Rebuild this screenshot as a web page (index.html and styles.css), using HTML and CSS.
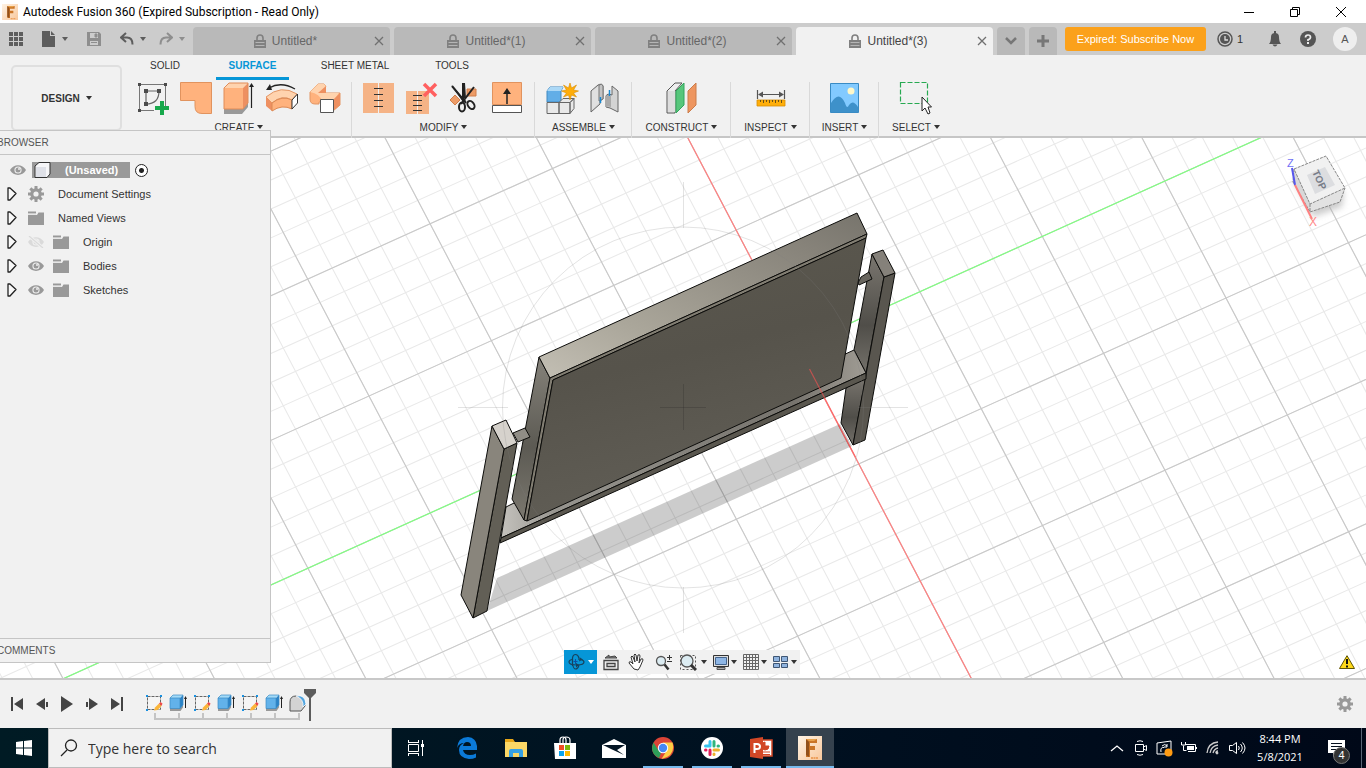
FILE: index.html
```html
<!DOCTYPE html>
<html lang="en">
<head>
<meta charset="utf-8">
<title>Autodesk Fusion 360</title>
<link rel="stylesheet" href="styles.css">
</head>
<body>
<svg class="defs" aria-hidden="true">
  <defs>
    <linearGradient id="g-f" x1="0" y1="0" x2="1" y2="1"><stop offset="0" stop-color="#fff3e4"/><stop offset="1" stop-color="#f8c79c"/></linearGradient>
  </defs>
  <symbol id="i-lock" viewBox="0 0 12 14"><path d="M3 6V4a3 3 0 0 1 6 0v2" fill="none" stroke="#808080" stroke-width="1.6"/><path fill="#808080" d="M0 6h12v8H0z"/><path stroke="#b5b5b5" d="M1.500 8.500h9M1.500 11.500h9"/></symbol>
  <symbol id="i-x" viewBox="0 0 10 10"><path d="M1 1l8 8M9 1L1 9" fill="none" stroke="#707070" stroke-width="1.300"/></symbol>
  <symbol id="i-arrow" viewBox="0 0 10 14"><path d="M1 1v12h2l6-6.500L3 1z" fill="#f8f8f8" stroke="#222" stroke-width="1.300" stroke-linejoin="round"/></symbol>
  <symbol id="i-eye" viewBox="0 0 16 12"><path d="M0 6c3.500-6.500 12.500-6.500 16 0-3.500 6.500-12.500 6.500-16 0z" fill="#999"/><circle cx="8" cy="6" r="3.600" fill="#efefef"/><circle cx="8" cy="6" r="2.500" fill="#999"/><circle cx="9" cy="5" r="1" fill="#eee"/></symbol>
  <symbol id="i-folder" viewBox="0 0 16 14"><path d="M0 4h9l1.500-2.500H16V14H0z" fill="#999"/><path d="M0 .5h8v2H0z" fill="#999"/><path d="M0 3.200h8.500" stroke="#ddd" stroke-width=".8"/></symbol>
  <symbol id="i-gear" viewBox="0 0 16 16"><g fill="#999"><path d="M6.500 0h3v16h-3z"/><path d="M0 6.500h16v3H0z"/><path d="M6.500 0h3v16h-3z" transform="rotate(45 8 8)"/><path d="M6.500 0h3v16h-3z" transform="rotate(-45 8 8)"/><circle cx="8" cy="8" r="5.800"/></g><circle cx="8" cy="8" r="2.600" fill="#f1f1f1"/></symbol>
  <symbol id="i-sketch" viewBox="0 0 18 18"><path d="M2.500 2.500h13v13h-13z" fill="#f5f5f5" stroke="#666" stroke-dasharray="3 1"/><g fill="#1990e0"><path d="M1 1h2v2H1zM15 1h2v2h-2zM1 15h2v2H1z"/></g><path d="M9 16.500l1-3 4-4 2.500 2.500-4 4z" fill="#fbb53a"/><path d="M14 9.500l1.500-1.500 2 1.500-1 2.500z" fill="#f04a4a"/></symbol>
  <symbol id="i-extrude" viewBox="0 0 18 18"><path d="M1 14h10l3-3v2.500L11.500 17H1z" fill="#999"/><path d="M1 4h10v10.500H1z" fill="#62b2ea"/><path d="M1 4l3-3h10l-3 3z" fill="#a4dbf8"/><path d="M11 4l3-3v10l-3 3.500z" fill="#2b83c6"/><path d="M1 4h10v10.500H1zM1 4l3-3h10v10l-3 3.500" fill="none" stroke="#398bc4" stroke-width=".7"/><path d="M16.500 4v10" stroke="#222"/><path d="M15 5l1.500-3L18 5z" fill="#222"/></symbol>
  <symbol id="i-f" viewBox="0 0 24 24"><path d="M0 0h24v24H0z" fill="url(#g-f)"/><path d="M8 3h11v4h-7v3h5v4h-5v7H8z" fill="#ca7426"/><path d="M8 3l3 3v15l-3-2z" fill="#92501a"/><path d="M8 3h11l-3 2h-5z" fill="#e8a14b"/><path d="M13 22h7" stroke="#eda15f" stroke-width="2" stroke-dasharray="2 .5"/></symbol>
</svg>

<header class="titlebar">
  <svg class="app-logo" viewBox="0 0 24 24"><use href="#i-f"/></svg>
  <h1>Autodesk Fusion 360 (Expired Subscription - Read Only)</h1>
  <div class="win-buttons">
    <button aria-label="Minimize"><svg width="12" height="12"><path d="M1 6.500h10" stroke="#000"/></svg></button>
    <button aria-label="Restore"><svg width="12" height="12"><path d="M1.500 3.500h7v7h-7zM3.500 3V1.500h7v7H9" fill="none" stroke="#000"/></svg></button>
    <button aria-label="Close"><svg width="12" height="12"><path d="M1 1l10 10M11 1L1 11" stroke="#000"/></svg></button>
  </div>
</header>

<div class="appbar">
  <div class="quick">
    <button aria-label="Data panel"><svg width="14" height="14" fill="#5d5d5d"><path d="M0 0h4v4H0zM5 0h4v4H5zM10 0h4v4h-4zM0 5h4v4H0zM5 5h4v4H5zM10 5h4v4h-4zM0 10h4v4H0zM5 10h4v4H5zM10 10h4v4h-4z"/></svg></button>
    <button class="with-caret" aria-label="File"><svg width="14" height="16"><path d="M0 0h8v5h5v11H0zM9 0l4 4H9z" fill="#5d5d5d"/></svg><i class="caret"></i></button>
    <button class="faded" aria-label="Save"><svg width="14" height="14"><path d="M0 0h12l2 2v12H0z" fill="#8e8e8e"/><path d="M3 1h8v5H3zM3 9h8v4H3z" fill="#ccc"/><path d="M8 2h2v3H8zM4 10.500h6" fill="#8e8e8e" stroke="#8e8e8e"/></svg></button>
    <button class="with-caret" aria-label="Undo"><svg width="14" height="14"><path d="M6 1L1 5.500 6 10M1.500 5.500H7q5.500 0 5.500 7" fill="none" stroke="#5d5d5d" stroke-width="2"/></svg><i class="caret"></i></button>
    <button class="with-caret faded" aria-label="Redo"><svg width="14" height="14"><path d="M8 1l5 4.500L8 10M12.500 5.500H7q-5.500 0-5.500 7" fill="none" stroke="#8e8e8e" stroke-width="2"/></svg><i class="caret"></i></button>
  </div>
  <nav class="doc-tabs">
    <div class="doc-tab"><a href="#"><svg width="12" height="14"><use href="#i-lock"/></svg>Untitled*</a><button aria-label="Close tab"><svg width="10" height="10"><use href="#i-x"/></svg></button></div>
    <div class="doc-tab"><a href="#"><svg width="12" height="14"><use href="#i-lock"/></svg>Untitled*(1)</a><button aria-label="Close tab"><svg width="10" height="10"><use href="#i-x"/></svg></button></div>
    <div class="doc-tab"><a href="#"><svg width="12" height="14"><use href="#i-lock"/></svg>Untitled*(2)</a><button aria-label="Close tab"><svg width="10" height="10"><use href="#i-x"/></svg></button></div>
    <div class="doc-tab active"><a href="#"><svg width="12" height="14"><use href="#i-lock"/></svg>Untitled*(3)</a><button aria-label="Close tab"><svg width="10" height="10"><use href="#i-x"/></svg></button></div>
    <button class="tab-tool" aria-label="List tabs"><svg width="12" height="8"><path d="M1 1l5 5 5-5" fill="none" stroke="#777" stroke-width="2.500"/></svg></button>
    <button class="tab-tool" aria-label="New tab"><svg width="12" height="12"><path d="M6 0v12M0 6h12" stroke="#777" stroke-width="3"/></svg></button>
  </nav>
  <div class="account">
    <button class="subscribe">Expired: Subscribe Now</button>
    <button class="jobs"><svg width="16" height="16"><circle cx="8" cy="8" r="7" fill="#ccc" stroke="#555" stroke-width="1.500"/><circle cx="8" cy="8" r="5" fill="#555"/><path d="M8 5v4h3" fill="none" stroke="#ddd" stroke-width="1.300"/></svg>1</button>
    <button class="bell" aria-label="Notifications"><svg width="14" height="16"><path d="M1 13q2-2 2-7 0-4 4-4t4 4q0 5 2 7zM6 0h2v3H6z" fill="#555"/><path d="M4.500 13.500h5q-1 2-2.500 2t-2.500-2z" fill="#555"/></svg></button>
    <button class="help" aria-label="Help"><svg width="16" height="16"><circle cx="8" cy="8" r="8" fill="#555"/><path d="M5.500 6.500Q5.500 4 8 4t2.500 2.300Q10.500 8 8 8.700V10" fill="none" stroke="#eee" stroke-width="1.700"/><path d="M7 11h2v2H7z" fill="#eee"/></svg></button>
    <button class="avatar">A</button>
  </div>
</div>

<section class="ribbon">
  <button class="workspace">DESIGN<i class="caret"></i></button>
  <nav class="ribbon-tabs">
    <a href="#" class="t-solid">SOLID</a><a href="#" class="t-surface current">SURFACE</a><a href="#" class="t-sheet">SHEET METAL</a><a href="#" class="t-tools">TOOLS</a>
  </nav>
  <div class="groups">
    <div class="group">
      <div class="tools">
        <button aria-label="Create sketch"><svg viewBox="0 0 32 32"><path d="M2.500 2.500h26v26h-26z" fill="none" stroke="#777"/><path d="M9 9h13q0 13-13 13z" fill="none" stroke="#666" stroke-width="1.200"/><g fill="#4b4b4b"><path d="M1 1h3v3H1zM27 1h3v3h-3zM1 27h3v3H1zM7 7h4v4H7zM20 7h4v4h-4zM7 20h4v4H7z"/></g><path d="M22 19h5v5h5v5h-5v4h-5v-4h-5v-5h5z" fill="#f1f1f1"/><path d="M23 19h4v5h5v4h-5v5h-4v-5h-5v-4h5z" fill="#17a84b"/></svg></button>
        <button aria-label="Patch"><svg viewBox="0 0 32 32"><path d="M.5.500h31v31H22q-7 0-7-7v-6H.5z" fill="#ffb27d" stroke="#e1935e"/></svg></button>
        <button aria-label="Extrude"><svg viewBox="0 0 32 32"><path d="M1 27h18l6-6v4l-6 7H1z" fill="#999"/><path d="M1 6h19v21H1z" fill="#ffb27d"/><path d="M1 6l5-5h19l-5 5z" fill="#ffd3ae"/><path d="M20 6l5-5v20l-5 6z" fill="#ee9061"/><path d="M1 6l5-5h19v20l-5 6H1z" fill="none" stroke="#e08c58"/><path d="M28.500 4v22" stroke="#222" stroke-width="1.200"/><path d="M26 5l2.500-4L31 5z" fill="#222"/></svg></button>
        <button aria-label="Revolve"><svg viewBox="0 0 32 32"><path d="M0 15Q15 2 31 12l-5 6Q16 12 6 21z" fill="#ffd3ae" stroke="#e39664"/><path d="M0 15l6 6v8l-6-5z" fill="#ee9061"/><path d="M6 21q10-8 20-3v9q-10-5-20 2z" fill="#ffb27d" stroke="#dc8954"/><path d="M26 18l5.500-6v9L26 27z" fill="#fff" stroke="#333"/><path d="M3 6Q15-1 29 7" fill="none" stroke="#222" stroke-width="1.300"/><path d="M0 8l4-6 2 6z" fill="#222"/></svg></button>
        <button aria-label="Sweep"><svg viewBox="0 0 32 32"><path d="M1 10L9 2h6l2 2-4 7h12l6 0v12l-7 6V20H10v2H6q-5 0-5-5z" fill="#ffb27d" stroke="#e39664"/><path d="M1 10l8-8h6l2 2-4 7h17l-6 8H13Q11 12 1 10z" fill="#ffd3ae"/><path d="M9 11l8-7v7z" fill="#ee9061"/><path d="M24 18l7-7v12l-7 6z" fill="#ee9061"/><path d="M11.500 17.500h13v13h-13z" fill="#fff" stroke="#555"/></svg></button>
      </div>
      <button class="group-name">CREATE<i class="caret"></i></button>
    </div>
    <div class="group">
      <div class="tools">
        <button aria-label="Stitch"><svg viewBox="0 0 32 32"><path d="M0 1h15v30H0zM16 1h15v30H16z" fill="#f5b386"/><path d="M11 6.500h9M11 12.500h9M11 18.500h9M11 24.500h9" stroke="#333" stroke-width="1.200"/></svg></button>
        <button aria-label="Unstitch"><svg viewBox="0 0 32 32"><path d="M0 9h11v23H0zM12 9h11v23H12z" fill="#f5b386"/><path d="M7 13.500h9M7 18.500h9M7 23.500h9M7 28.500h9" stroke="#333" stroke-width="1.200"/><path d="M18 2l12 12M30 2L18 14" stroke="#ff6060" stroke-width="3.500"/></svg></button>
        <button aria-label="Trim"><svg viewBox="0 0 32 32"><path d="M18 7h9v7h-9zM1 18l5-5 5 5-5 5z" fill="#ed9c67" stroke="#d17f4c"/><path d="M3 4l14 17M14 1v19M25 5L12 22" stroke="#222" stroke-width="2"/><path d="M2 3l15 16-3 1zM13 1h3l1 15h-2z" fill="#222"/><ellipse cx="13" cy="25" rx="3" ry="4.500" fill="none" stroke="#222" stroke-width="2"/><ellipse cx="22" cy="23" rx="3" ry="4.500" transform="rotate(-35 22 23)" fill="none" stroke="#222" stroke-width="2"/></svg></button>
        <button aria-label="Extend"><svg viewBox="0 0 32 32"><path d="M.500.500h29v22H.500z" fill="#ffb27d" stroke="#e1935e"/><path d="M.500 23.500h29v7H.500z" fill="#fff" stroke="#555"/><path d="M15 9v13" stroke="#222" stroke-width="1.500"/><path d="M11 12l4-6 4 6z" fill="#222"/></svg></button>
      </div>
      <button class="group-name">MODIFY<i class="caret"></i></button>
    </div>
    <div class="group">
      <div class="tools">
        <button aria-label="New component"><svg viewBox="0 0 32 32"><path d="M1 9l3-4h13l-2 4v11H1z" fill="#62aee7" stroke="#4189c0"/><path d="M1 9l3-4h13l-2 4z" fill="#abd8f6"/><path d="M1 20.500h12v11H1zM13 20.500l4-4h11l-4 4zM13 20.500h11v11H13zM24 20.500l4-4v10l-4 5z" fill="#e9e9e9" stroke="#666"/><path d="M24 1l1.500 5 5-3-3 5 5 1-5 2 3 4-5-2-1.500 5-1.500-5-5 2 3-4-5-2 5-1-3-5 5 3z" fill="#ffad08" stroke="#d88b00" stroke-width=".6"/></svg></button>
        <button aria-label="Joint"><svg viewBox="0 0 32 32"><path d="M2 9l7-6q4-2 5 1v13l-3 2v3l-9 8zM29 9l-6-5v9q-5-2-6 1v11l4 1 8 4z" fill="#d4d4d4" stroke="#666"/><path d="M3 9l7-5v17l-7 7z" fill="#e0e0e0"/><path d="M10 3q3-2 4 1v13l-4 2z" fill="#c4c4c4" stroke="#777"/><path d="M17 14q3-3 5 0v11q-3-1-5 0z" fill="#aaa"/><path d="M11.500 15v6M20.500 8v6" stroke="#1889d2" stroke-width="1.500"/></svg></button>
      </div>
      <button class="group-name">ASSEMBLE<i class="caret"></i></button>
    </div>
    <div class="group g-construct">
      <div class="tools"><button aria-label="Offset plane"><svg viewBox="0 0 32 32"><path d="M1 9l8-8h7L9 9v22H1z" fill="#eee" stroke="#555"/><path d="M2 9h7v21H2z" fill="#ddd"/><path d="M10 9l8-8v22l-8 8z" fill="#57c67b" stroke="#32a65c"/><path d="M22 9l8-8v22l-8 8z" fill="#ee9660" stroke="#cb7c4b"/></svg></button></div>
      <button class="group-name">CONSTRUCT<i class="caret"></i></button>
    </div>
    <div class="group g-inspect">
      <div class="tools"><button aria-label="Measure"><svg viewBox="0 0 32 32"><path d="M2.500 8v9M29.500 8v9M4 12.500h24" stroke="#555" stroke-width="1.200"/><path d="M3 12.500l5-3v6zM29 12.500l-5-3v6z" fill="#555"/><path d="M2 18h28v6H2z" fill="#ffae09" stroke="#d88e00" stroke-width=".8"/><path d="M5.500 18v2M8.500 18v3M11.500 18v2M14.500 18v3M17.500 18v2M20.500 18v3M23.500 18v2M26.500 18v3" stroke="#695017"/></svg></button></div>
      <button class="group-name">INSPECT<i class="caret"></i></button>
    </div>
    <div class="group g-insert">
      <div class="tools"><button aria-label="Insert image"><svg viewBox="0 0 32 32"><path d="M1.500 1.500h28v29h-28z" fill="#82caff" stroke="#398bc4"/><path d="M2 21q8-13 14 0 2 7 4 2 4-6 9 2v5H2z" fill="#3e91ca"/><circle cx="22" cy="9" r="3.500" fill="#fff8c9"/></svg></button></div>
      <button class="group-name">INSERT<i class="caret"></i></button>
    </div>
    <div class="group g-select">
      <div class="tools"><button aria-label="Select"><svg viewBox="0 0 32 32"><path d="M.500.500h27v21H.500z" fill="none" stroke="#27a951" stroke-dasharray="5 2" stroke-width="1.200"/><path d="M22 15v14l3-3 3 6 2-1-2-6h3.500z" fill="#fff" stroke="#222"/></svg></button></div>
      <button class="group-name">SELECT<i class="caret"></i></button>
    </div>
  </div>
</section>

<main class="workspace-area">
  <svg class="scene" viewBox="0 138 1366 540" preserveAspectRatio="xMidYMid slice" role="img" aria-label="Board on a stand">
    <defs>
      <linearGradient id="m-top" x1="0" y1="1" x2="1" y2="0"><stop offset="0" stop-color="#c3bfb4"/><stop offset=".3" stop-color="#aaa69a"/><stop offset=".8" stop-color="#87837a"/><stop offset="1" stop-color="#77746c"/></linearGradient>
      <linearGradient id="m-side" x1="0" y1="0" x2="0" y2="1"><stop offset="0" stop-color="#85827a"/><stop offset=".55" stop-color="#5c5a53"/><stop offset="1" stop-color="#7b786f"/></linearGradient>
      <linearGradient id="m-front" x1="0" y1="0" x2=".3" y2="1"><stop offset="0" stop-color="#5c594f"/><stop offset=".5" stop-color="#56534b"/><stop offset="1" stop-color="#615e56"/></linearGradient>
      <linearGradient id="m-rail" x1="0" y1="0" x2="1" y2="0"><stop offset="0" stop-color="#c4c2bd"/><stop offset=".15" stop-color="#97958f"/><stop offset=".8" stop-color="#76736d"/><stop offset="1" stop-color="#a09c94"/></linearGradient>
      <linearGradient id="m-post" x1="0" y1="0" x2="0" y2="1"><stop offset="0" stop-color="#7a766f"/><stop offset=".6" stop-color="#504e49"/><stop offset="1" stop-color="#74716a"/></linearGradient>
    </defs>
    <path d="M0 138h1366v540H0z" fill="#fff"/>
    <g transform="matrix(1.224 -.553 .613 1.169 797.500 347)" fill="none">
      <g stroke="#e9e9e9">
        <path d="M-1000.400 0H1000" stroke-width="2000" stroke-dasharray=".8 19.200"/>
        <path d="M0-1000.400V1000" stroke-width="2000" stroke-dasharray=".8 19.200"/>
      </g>
      <g stroke="#c8c8c8">
        <path d="M-1000.400 0H1000" stroke-width="2000" stroke-dasharray=".8 99.200"/>
        <path d="M0-1000.400V1000" stroke-width="2000" stroke-dasharray=".8 99.200"/>
      </g>
      <path d="M-1000 0H1000" stroke="#80ff80" stroke-width=".9"/>
      <path d="M0-1000V1000" stroke="#ff8080" stroke-width=".9"/>
    </g>
    <path d="M497 578L840 424l12 22-365 165z" fill="#000" fill-opacity=".2"/>
    <g stroke="#0c0c0a" stroke-linejoin="round">
      <path d="M846 388l20-12-13 69-12-22z" fill="url(#m-post)"/>
      <path d="M872 254l12 23-18 96-12-23z" fill="url(#m-post)"/>
      <path d="M884 277l11-4-30 167-12 5z" fill="#59564f"/>
      <path d="M872 254l11-4 12 23-11 4z" fill="#85817a"/>
      <path d="M858 283l3-6 8-5 3 7-13 6z" fill="#68655e"/>
      <path d="M506 507l6-3 329-148 13-6 12 23-365 165z" fill="url(#m-rail)"/>
      <path d="M501 538l365-165v6L500 543z" fill="#5a574f"/>
      <path d="M539 357l11 21-26 142-12-21z" fill="url(#m-side)"/>
      <path d="M539 357l318-144 10 21-317 144z" fill="url(#m-top)"/>
      <path d="M550 378l317-144-1 4-313 142-26 141-3-1z" fill="#817d72"/>
      <path d="M553 380l313-142-25 140-314 143z" fill="url(#m-front)"/>
      <path d="M513 433l12-5 5 9-12 5z" fill="#908d86"/>
      <path d="M504 449l13-6-30 168-14 7z" fill="#625f56"/>
      <path d="M492 426l12 23-31 169-12-23z" fill="#89857c"/>
      <path d="M492 426l14-6 11 23-13 6z" fill="#d6d2cc"/>
    </g>
    <path d="M809.500 369l46 88" stroke="#ff5050" stroke-opacity=".6" stroke-width="1.200"/>
    <g fill="none" stroke="#808080" stroke-opacity=".22">
      <circle cx="683" cy="407.500" r="180.500"/>
      <path d="M458 407.500h50M858 407.500h50M683.500 182v46M683.500 587v46"/>
      <path d="M660 407.500h46M683.500 384v46" stroke="#222"/>
    </g>
  </svg>

  <svg class="view-cube" viewBox="0 0 66 76" role="img" aria-label="View cube">
    <defs><filter id="soft"><feGaussianBlur stdDeviation="3"/></filter></defs>
    <path d="M8 25l20 38 29-10 2-16z" fill="#aaa" opacity=".6" filter="url(#soft)"/>
    <path d="M9 15l32-13 19 32-35 16z" fill="#f1f1f1"/><path d="M25 50l35-16-5 14-30 10z" fill="#e2e2e2"/><path d="M9 15l16 35v8L8 28z" fill="#d8d8d8"/>
    <path d="M22 21l18-8 10 18-20 9z" fill="#dcdde0"/>
    <path d="M9 15l32-13 19 32-35 16zM25 50v8l30-10 5-14M9 15L8 28l17 30" fill="none" stroke="#888" stroke-dasharray="3 1"/>
    <text x="0" y="0" transform="translate(27 18) rotate(65)" class="cube-text">TOP</text>
    <path d="M7 14l3 17" stroke="#5757ed" stroke-width="2"/><path d="M10 31l17 34" stroke="#ff8080" stroke-width="2"/>
    <text x="2" y="13" class="axis-z">Z</text><text x="24" y="72" class="axis-x">X</text>
  </svg>

  <aside class="browser-panel">
    <h2>BROWSER</h2>
    <ul class="tree">
      <li class="root"><svg width="16" height="12"><use href="#i-eye"/></svg><span class="root-name"><svg width="18" height="16"><path d="M1 4l4-3.500h11V12l-3 3.500H1z" fill="#f6f6f8" stroke="#333"/><path d="M2 5h10v10H2z" fill="#dfe1e8"/></svg>(Unsaved)</span><input type="radio" checked aria-label="Activate component"></li>
      <li><svg width="10" height="14"><use href="#i-arrow"/></svg><svg width="16" height="16"><use href="#i-gear"/></svg><span>Document Settings</span></li>
      <li><svg width="10" height="14"><use href="#i-arrow"/></svg><svg width="16" height="14"><use href="#i-folder"/></svg><span>Named Views</span></li>
      <li class="nested"><svg width="10" height="14"><use href="#i-arrow"/></svg><svg class="hidden-eye" width="16" height="12"><use href="#i-eye"/><path d="M1 0l14 12" stroke="#f1f1f1" stroke-width="3"/><path d="M1 0l14 12" stroke="#999" stroke-width="1.200"/></svg><svg width="16" height="14"><use href="#i-folder"/></svg><span>Origin</span></li>
      <li class="nested"><svg width="10" height="14"><use href="#i-arrow"/></svg><svg width="16" height="12"><use href="#i-eye"/></svg><svg width="16" height="14"><use href="#i-folder"/></svg><span>Bodies</span></li>
      <li class="nested"><svg width="10" height="14"><use href="#i-arrow"/></svg><svg width="16" height="12"><use href="#i-eye"/></svg><svg width="16" height="14"><use href="#i-folder"/></svg><span>Sketches</span></li>
    </ul>
    <h2 class="comments">COMMENTS</h2>
  </aside>

  <div class="nav-bar">
    <button class="on" aria-label="Orbit"><svg width="18" height="18"><path d="M4.500 13V5Q5 1.500 7.500 1.500T11 5v2M4.500 11q1 5 3 5 2.500 0 3.500-4" fill="none" stroke="#17435e" stroke-width="1.200"/><path d="M4 6.500Q1 7 1 9q0 3 8 3 7 0 7-3 0-1.500-3-2.500" fill="none" stroke="#17435e" stroke-width="1.200"/><path d="M12 4.500l-1 4 4-2zM8 10l3 2-3 2.500z" fill="#17435e"/><path d="M7.500 6v5M5.500 8.500h4" stroke="#0d50a0"/></svg><i class="caret"></i></button>
    <button class="n-look" aria-label="Look at"><svg width="16" height="18"><path d="M1 7.500h14v9H1zM4 10.500h8v3H4z" fill="#eee" stroke="#444" stroke-width="1.300"/><path d="M2 5l4-3v2l6-1 2 2z" fill="#888" stroke="#444"/></svg></button>
    <button class="n-pan" aria-label="Pan"><svg width="18" height="18"><path d="M6 16l-5-6q0-2 2-1l2 2-2-7q1-2 2 0l2 5-1-7q1-2 2 0l1 6 1-6q2-1 2 1l-1 7 2-4q2-1 2 1l-3 7-2 3z" fill="#fff" stroke="#333"/></svg></button>
    <button class="n-zoom" aria-label="Zoom"><svg width="18" height="18"><circle cx="6" cy="8" r="4.500" fill="#dcecf2" stroke="#555" stroke-width="1.300"/><path d="M9.500 11.500l4 5" stroke="#333" stroke-width="2.500"/><path d="M14.500 2v5M12 4.500h5M12 8.500h5" stroke="#333"/></svg></button>
    <button class="n-fit" aria-label="Fit"><svg width="18" height="18"><path d="M1.500 2.500h15v14h-15z" fill="none" stroke="#555" stroke-dasharray="2 2"/><circle cx="8" cy="8" r="6" fill="#dcecf2" stroke="#555" stroke-width="1.300"/><path d="M12 12l5 5" stroke="#333" stroke-width="3"/></svg><i class="caret"></i></button>
    <button aria-label="Display settings"><svg width="16" height="16"><path d="M.5 1.500h15v11H.5z" fill="#ddd" stroke="#333"/><path d="M2.500 3.500h11v7h-11z" fill="#8eb6e5" stroke="#45658e"/><path d="M4 13.500h8v2H4z" fill="#aaa" stroke="#555"/></svg><i class="caret"></i></button>
    <button aria-label="Grid and snaps"><svg width="16" height="16"><path d="M.5.500h15v15H.500zM3.500 0v16M6.500 0v16M9.500 0v16M12.500 0v16M0 3.500h16M0 6.500h16M0 9.500h16M0 12.500h16" fill="none" stroke="#666"/></svg><i class="caret"></i></button>
    <button aria-label="Viewports"><svg width="16" height="16"><path d="M.500 2.500h6v5h-6zM8.500 2.500h6v5h-6zM.500 9.500h6v4h-6zM8.500 9.500h6v4h-6z" fill="#8fb3de" stroke="#3e5674"/></svg><i class="caret"></i></button>
  </div>
  <svg class="warning" width="16" height="14"><path d="M8 .7L15.500 13.500H.500z" fill="#ffd91a" stroke="#5e5300"/><path d="M8 4v5M8 10.500v2" stroke="#111" stroke-width="2"/></svg>
</main>

<section class="timeline">
  <div class="playback">
    <button aria-label="First"><svg width="14" height="14"><path d="M1 0h2v14H1zM13 1v12L4 7z" fill="#444"/></svg></button>
    <button aria-label="Previous"><svg width="14" height="14"><path d="M10 1v12L1 7zM11 5h2v5h-2z" fill="#444"/></svg></button>
    <button aria-label="Play"><svg width="14" height="16"><path d="M1 0l12 8L1 16z" fill="#444"/></svg></button>
    <button aria-label="Next"><svg width="14" height="14"><path d="M4 1v12l9-6zM1 5h2v5H1z" fill="#444"/></svg></button>
    <button aria-label="Last"><svg width="14" height="14"><path d="M11 0h2v14h-2zM1 1v12l9-6z" fill="#444"/></svg></button>
  </div>
  <div class="history">
    <div class="features">
      <button aria-label="Sketch 1"><svg width="18" height="18"><use href="#i-sketch"/></svg></button>
      <button aria-label="Extrude 1"><svg width="18" height="18"><use href="#i-extrude"/></svg></button>
      <button aria-label="Sketch 2"><svg width="18" height="18"><use href="#i-sketch"/></svg></button>
      <button aria-label="Extrude 2"><svg width="18" height="18"><use href="#i-extrude"/></svg></button>
      <button aria-label="Sketch 3"><svg width="18" height="18"><use href="#i-sketch"/></svg></button>
      <button aria-label="Extrude 3"><svg width="18" height="18"><use href="#i-extrude"/></svg></button>
      <button aria-label="Fillet"><svg width="18" height="18"><path d="M1 8q0-6 6-6 9 1 9 10l-4 5H1z" fill="#d3d3d3" stroke="#555"/><path d="M7 2q9-2 10 8l-3 3Q15 5 7 2z" fill="#51a4df" stroke="#fff" stroke-width=".8"/></svg></button>
    </div>
    <svg class="track" width="146" height="8"><path d="M1 0v6h144V0M25 0v6M49 0v6M73 0v6M97 0v6M121 0v6" fill="none" stroke="#c4c4c4" stroke-width="2"/></svg>
  </div>
  <svg class="marker" width="12" height="32"><path d="M0 0h12v4L7 9v23H5V9L0 4z" fill="#5c5c5c"/></svg>
  <button class="settings" aria-label="Timeline settings"><svg width="16" height="16"><use href="#i-gear"/></svg></button>
</section>

<footer class="taskbar">
  <button class="start" aria-label="Start"><svg width="16" height="16" fill="#fff"><path d="M0 2l7-1v6.500H0zM8 1l8-1v7.500H8zM0 8.500h7V15l-7-1zM8 8.500h8V16l-8-1z"/></svg></button>
  <label class="search"><svg width="18" height="18"><circle cx="11" cy="6.500" r="5.500" fill="none" stroke="#222" stroke-width="1.300"/><path d="M7 11l-6 6" stroke="#222" stroke-width="1.300"/></svg><input type="text" placeholder="Type here to search" aria-label="Search"></label>
  <div class="apps">
    <button class="task-view" aria-label="Task View"><svg width="18" height="16" fill="none" stroke="#fff"><path d="M1.500 4.500h10v7h-10zM1.500 2V0M11.500 2V0M1.500 13.500V16M11.500 13.500V16M1 2.500h11M1 13.500h11M15.500 0v16"/><path d="M14 4h3v3h-3z" fill="#fff" stroke="none"/></svg></button>
    <button aria-label="Edge"><svg width="20" height="22"><path d="M0 11Q1 0 11 0q10 1 9 13H6q1 5 7 5 3 0 6-1.500v4Q16 22 12 22 2 21 2 13q0-5 5-7-5 0-7 5zm6-2h8q0-4-4-4-3 0-4 4z" fill="#0b7ad8" fill-rule="evenodd"/></svg></button>
    <button aria-label="File Explorer"><svg width="22" height="20"><path d="M0 1h8l2 3h12v15H0z" fill="#e8a718"/><path d="M0 4h22v15H0z" fill="#fcd866"/><path d="M4 19v-6q0-2 2-2h10q2 0 2 2v6h-4v-4H8v4z" fill="#36a1e4"/></svg></button>
    <button aria-label="Store"><svg width="24" height="24"><path d="M7 7V4q0-3 3-3t3 3v3M10 7V4q0-3 3-3 4 0 4 3v3" fill="none" stroke="#fff" stroke-width="1.200"/><path d="M1 7h22v16H2z" fill="#fff"/><path d="M6 9h5v5H6z" fill="#f04c23"/><path d="M12 9h5v5h-5z" fill="#7db70a"/><path d="M6 15h5v5H6z" fill="#0ba3ec"/><path d="M12 15h5v5h-5z" fill="#fdb900"/></svg></button>
    <button aria-label="Mail"><svg width="24" height="20"><path d="M0 7l12-6 12 6v13H0z" fill="#fff"/><path d="M1 7h22l-8 5 7 5-13-6z" fill="#051625"/></svg></button>
    <button class="running" aria-label="Chrome"><svg width="22" height="22"><circle cx="11" cy="11" r="11" fill="#db4437"/><path d="M11 11l-4 10Q-3 16 1.500 5.500l5 8z" fill="#2d9e58"/><path d="M11 5.500h9.500Q24 19 9.500 22l5-8z" fill="#fdce45"/><circle cx="11" cy="11" r="5.200" fill="#fff"/><circle cx="11" cy="11" r="4.200" fill="#4688f4"/></svg></button>
    <button class="running" aria-label="Slack"><svg width="22" height="22"><circle cx="11" cy="11" r="11" fill="#fff"/><g fill="none" stroke-width="3" stroke-linecap="round"><path d="M9 4.500V9M4.500 9H9" stroke="#36c5f0"/><path d="M13 4.500V9M17.500 9H17" stroke="#2eb67d"/><path d="M13 13h4.500M13 17.500V17" stroke="#ecb22e"/><path d="M9 13v4.500M4.500 13H5" stroke="#e01e5a"/></g></svg></button>
    <button class="running" aria-label="PowerPoint"><svg width="24" height="22"><path d="M12 3h11v16H12z" fill="#fff" stroke="#d24726" stroke-width="1.500"/><path d="M16 5v4h4q0 4-4 4-3 0-3-4t3-4zM14 15h7M14 17.500h7" fill="#d24726" stroke="#d24726"/><path d="M1 2l13-2v22L1 20z" fill="#d24726"/><path d="M5.500 16V7H8q3 0 3 2.500T8 12H6" fill="none" stroke="#fff" stroke-width="2"/></svg></button>
    <button class="running focused" aria-label="Fusion 360"><svg width="24" height="24"><use href="#i-f"/></svg></button>
  </div>
  <div class="tray">
    <button aria-label="Hidden icons"><svg width="14" height="8"><path d="M1 7l6-5 6 5" fill="none" stroke="#fff" stroke-width="1.300"/></svg></button>
    <button aria-label="Meet now"><svg width="14" height="16" fill="none" stroke="#fff"><path d="M1.500 4.500h8v7h-8zM9.500 7l3-1.500v5l-3-1.500M3 1.500Q6 0 9 1.500M3 14.500q3 1.500 6 0"/></svg></button>
    <button aria-label="Updates"><svg width="18" height="17"><path d="M1 3l14-2v13H1zM5 12q-1-5 3-4.500M6 6q3-3 5 0M11 4v3H8" fill="none" stroke="#fff"/><circle cx="12.500" cy="12.500" r="4" fill="#ff9b13"/></svg></button>
    <button aria-label="Battery"><svg width="18" height="14"><path d="M5.500 3.500h10v7H8M16.500 6v2M1.500 1v3h4V1M3.500 4.500v5h3" fill="none" stroke="#fff"/><path d="M7 5h7v4H7z" fill="#fff"/></svg></button>
    <button aria-label="Network"><svg width="14" height="14" fill="none" stroke="#ccc"><path d="M1 12Q2 2 12 1M4 12q1-7 8-8M7 12q1-4 5-5M10 12q0-2 2-2" stroke-width="1.300"/><circle cx="11" cy="12" r="1" fill="#fff"/></svg></button>
    <button aria-label="Volume"><svg width="18" height="14" fill="none" stroke="#fff"><path d="M1.500 4.500h3l4-3v11l-4-3h-3zM10.500 5q1.500 2 0 4M12.500 3q3.500 4 0 8M14.500 1.500q5 5.500 0 11"/></svg></button>
    <button class="clock"><span>8:44 PM</span><span>5/8/2021</span></button>
    <button class="action-center" aria-label="4 notifications"><svg width="17" height="17"><path d="M0 0h17v13H9l-4 4v-4H0z" fill="#fff"/><path d="M3 3.500h11M3 6.500h11M3 9.500h8" stroke="#07111f"/></svg><span class="count">4</span></button>
  </div>
</footer>
</body>
</html>
```
FILE: styles.css
```css
* { box-sizing: border-box; }
body {
  margin: 0;
  height: 100vh;
  display: flex;
  flex-direction: column;
  overflow: hidden;
  font-family: "Liberation Sans", Arial, sans-serif;
  font-size: 11px;
  color: #333;
  background: #f1f1f1;
}
button {
  margin: 0;
  padding: 0;
  border: 0;
  background: none;
  font: inherit;
  color: inherit;
  display: flex;
  align-items: center;
  justify-content: center;
}
a { color: inherit; text-decoration: none; }
svg { display: block; flex: none; }
.defs { position: absolute; width: 0; height: 0; }
.caret {
  flex: none;
  border: 3px solid transparent;
  border-top: 4px solid currentColor;
  border-bottom: 0;
}

/* Title bar */
.titlebar {
  flex: none;
  height: 23px;
  display: flex;
  align-items: center;
  padding: 0 2px;
  background: #fff;
}
.app-logo { width: 16px; height: 16px; margin-right: 5px; }
.titlebar h1 {
  margin: 0;
  font: 400 12px/16px Roboto, "Open Sans", sans-serif;
  color: #000;
}
.win-buttons { margin-left: auto; display: flex; }
.win-buttons button { width: 46px; height: 20px; }

/* Application bar */
.appbar {
  flex: none;
  height: 32px;
  display: flex;
  background: #ccc;
}
.quick {
  width: 193px;
  padding-left: 9px;
  display: flex;
  align-items: center;
  gap: 19px;
  color: #5d5d5d;
}
.with-caret { gap: 6px; }
.faded { color: #8e8e8e; }
.quick .with-caret + .with-caret { margin-left: -6px; }
.doc-tabs { display: flex; gap: 4px; padding-top: 4px; }
.doc-tab {
  width: 197px;
  padding: 0 6px 0 4px;
  display: flex;
  align-items: center;
  border-radius: 4px 4px 0 0;
  background: #b9b9b9;
  font-size: 12px;
  color: #666;
}
.doc-tab a {
  flex: 1;
  display: flex;
  align-items: center;
  justify-content: center;
  gap: 6px;
}
.doc-tab.active { background: #f1f1f1; color: #444; }
.tab-tool { width: 28px; border-radius: 4px 4px 0 0; background: #b9b9b9; }
.account {
  flex: 1;
  display: flex;
  align-items: center;
  justify-content: flex-end;
  padding-right: 9px;
}
.subscribe {
  width: 141px;
  height: 24px;
  margin: 0 auto 0 8px;
  border-radius: 3px;
  background: #fba11b;
  color: #fff;
}
.jobs { gap: 4px; }
.bell { margin-left: 25px; }
.help { margin: 0 17px 0 18px; }
.avatar { width: 24px; height: 24px; border-radius: 50%; background: #eee; color: #555; }

/* Ribbon */
.ribbon {
  flex: none;
  height: 83px;
  display: grid;
  grid-template: 25px 1fr / 122px 1fr;
  column-gap: 4px;
  border-bottom: 2px solid #c6c6c6;
  background: #f1f1f1;
}
.workspace {
  grid-row: 1 / 3;
  margin: 10px 0 10px 11px;
  border: 2px solid #dfdfdf;
  border-radius: 5px;
  gap: 6px;
  font-size: 10px;
  font-weight: 700;
}
.ribbon-tabs {
  display: flex;
  padding-left: 15px;
  gap: 27px;
  font-size: 10px;
  line-height: 22px;
  text-align: center;
}
.ribbon-tabs a { border-bottom: 3px solid transparent; }
.t-solid { width: 48px; }
.t-surface { width: 73px; }
.t-sheet { width: 78px; }
.t-tools { width: 62px; }
.ribbon-tabs .current { color: #0696d7; border-color: #0696d7; font-weight: 700; }
.groups { display: flex; padding: 2px 0 3px; }
.group {
  display: flex;
  flex-direction: column;
  align-items: center;
  padding: 0 10px 0 11px;
}
.group + .group { border-left: 1px solid #d9d9d9; }
.tools { display: flex; gap: 11px; }
.tools svg { width: 32px; height: 32px; overflow: visible; }
.group-name { gap: 3px; height: 24px; padding-top: 2px; font-size: 10px; white-space: nowrap; }
.g-construct { width: 99px; }
.g-inspect { width: 79px; }
.g-insert { width: 69px; }
.g-select { width: 74px; }

/* Canvas */
.workspace-area { flex: 1; min-height: 0; position: relative; }
.scene { width: 100%; height: 100%; }
.view-cube { position: absolute; top: 16px; right: 15px; width: 66px; height: 76px; }
.cube-text { font-size: 10px; fill: #777c88; font-weight: 700; }
.axis-z { font-size: 11px; fill: #7171f5; }
.axis-x { font-size: 12px; fill: #ff8989; }
.warning { position: absolute; right: 11px; bottom: 9px; }

.browser-panel {
  position: absolute;
  top: -8px;
  bottom: 15px;
  left: 0;
  width: 271px;
  display: flex;
  flex-direction: column;
  border: 1px solid #c5c5c5;
  border-left: 0;
  background: #f1f1f1;
}
.browser-panel h2 {
  margin: 0 0 0 -3px;
  height: 24px;
  border-bottom: 1px solid #c5c5c5;
  font-size: 10px;
  font-weight: 400;
  line-height: 23px;
  color: #555;
}
.browser-panel .comments { border-top: 1px solid #c5c5c5; border-bottom: 0; }
.tree { flex: 1; margin: 0; padding: 3px 0 0 7px; list-style: none; }
.tree li {
  height: 24px;
  display: flex;
  align-items: center;
  gap: 11px;
}
.tree li > span { margin-left: 3px; }
.tree .nested { gap: 9px; }
.tree .nested > svg:first-child { margin-right: 2px; }
.tree .nested > span { margin-left: 5px; }
.tree .root { padding-left: 3px; gap: 5px; }
.tree .root .root-name {
  width: 98px;
  height: 16px;
  margin-left: 1px;
  padding-left: 2px;
  display: flex;
  align-items: center;
  gap: 13px;
  background: #999;
  color: #fff;
  font-weight: 700;
}
.root input {
  appearance: none;
  width: 13px;
  height: 13px;
  margin: 0;
  border: 1px solid #222;
  border-radius: 50%;
  background: radial-gradient(circle, #222 2px, #fff 3px);
}
.hidden-eye { opacity: .25; }

.nav-bar {
  position: absolute;
  left: 50%;
  bottom: 4px;
  width: 236px;
  height: 24px;
  margin-left: -119px;
  padding-right: 3px;
  display: flex;
  justify-content: space-between;
  background: #f1f1f1;
}
.nav-bar button { gap: 2px; }
.nav-bar .on { width: 33px; background: #0696d7; color: #fff; }
.nav-bar .n-fit { gap: 4px; }
.nav-bar .n-pan { margin: 0 3px; }

/* Timeline */
.timeline {
  flex: none;
  height: 50px;
  display: flex;
  border-top: 2px solid #c8c8c8;
  background: #f1f1f1;
}
.playback { display: flex; align-items: center; gap: 11px; padding-left: 10px; }
.history { padding: 14px 0 0 21px; }
.features { display: flex; gap: 6px; }
.track { margin: 1px 0 0 9px; }
.marker { margin: 9px 0 0 -3px; }
.settings { margin: 0 13px 0 auto; }

/* Taskbar */
.taskbar {
  flex: none;
  height: 40px;
  display: flex;
  background: linear-gradient(90deg, #001b24, #001020 60%, #000818);
  color: #fff;
}
.start { width: 48px; }
.search {
  width: 344px;
  padding-left: 11px;
  display: flex;
  align-items: center;
  gap: 10px;
  border: 1px solid #bcbcbc;
  background: #f1f1f1;
}
.search input {
  flex: 1;
  min-width: 0;
  padding: 0;
  border: 0;
  outline: 0;
  background: none;
  font: 14px "Open Sans", "Noto Sans", sans-serif;
}
.search input::placeholder { color: #333; opacity: 1; }
.apps { display: flex; gap: 1px; }
.apps button { width: 48px; }
.apps .task-view { margin-right: 2px; }
.running { background: linear-gradient(#76b9ed, #76b9ed) bottom / 40px 2px no-repeat; }
.focused { background-color: #35414d; background-size: 100% 2px; }
.tray { margin-left: auto; display: flex; }
.tray button { width: 24px; }
.tray .clock {
  width: 62px;
  flex-direction: column;
  font: 11px/18px "Open Sans", "Noto Sans", sans-serif;
}
.tray .action-center {
  position: relative;
  width: 51px;
  margin-right: 4px;
  border-right: 1px solid #596575;
}
.count {
  position: absolute;
  left: 22px;
  top: 19px;
  width: 17px;
  height: 17px;
  border: 1px solid #777;
  border-radius: 50%;
  background: #333;
  font-size: 11px;
  line-height: 15px;
}
```
